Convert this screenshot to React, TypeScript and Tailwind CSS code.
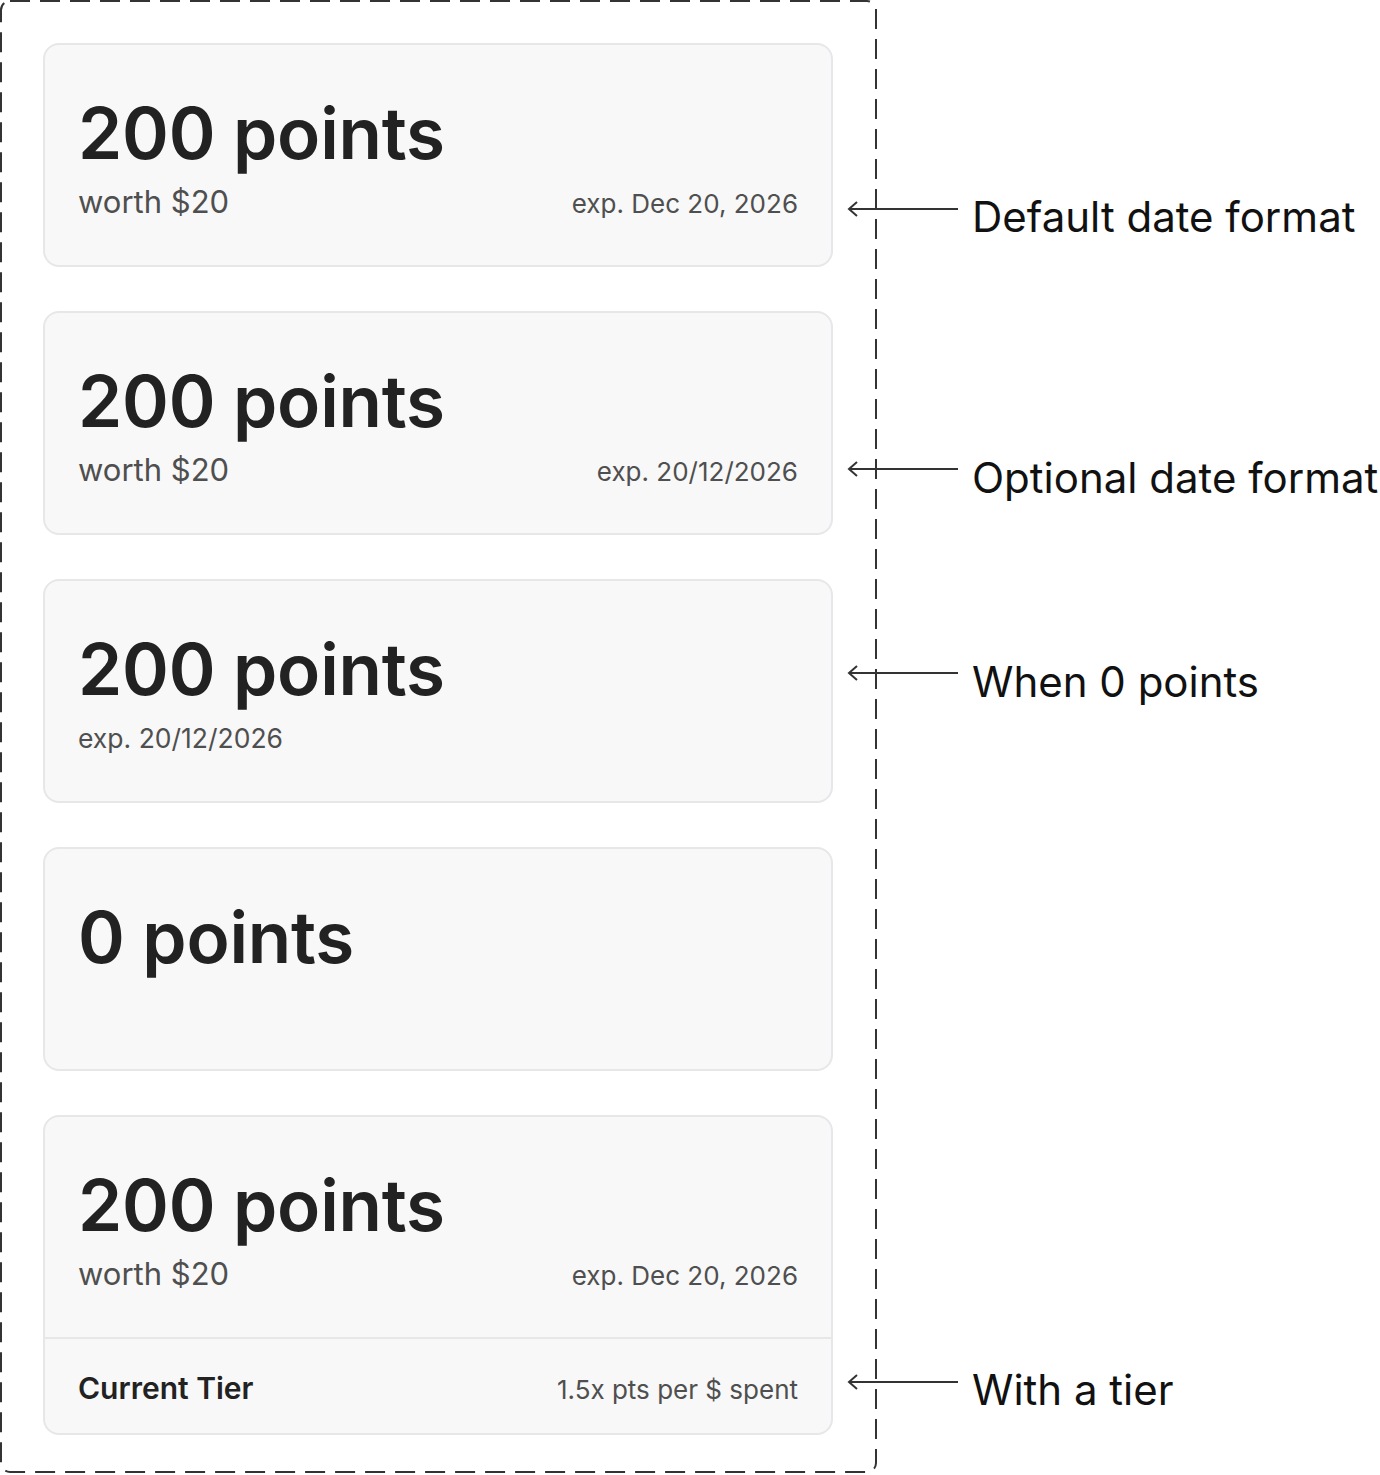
import React from "react";

type CardProps = {
  title: string;
  left?: string;
  leftSmall?: boolean;
  right?: string;
  tier?: boolean;
};

function Card({ title, left, leftSmall, right, tier }: CardProps) {
  return (
    <div className="w-[790px] rounded-[16px] border-2 border-[#e7e7ea] bg-[#f8f8f8]">
      <div className="h-[220px] px-[33px] pt-[53px]">
        <div className="text-[71px] leading-[70px] font-semibold text-[#222222] tracking-[-0.2px]">{title}</div>
        {(left || right) && (
          <div className="mt-[19px] flex items-baseline justify-between">
            {left ? (
              leftSmall ? (
                <span className="text-[26.5px] leading-[30px] text-[#4f4f4f]">{left}</span>
              ) : (
                <span className="text-[31px] leading-[30px] text-[#4f4f4f]">{left}</span>
              )
            ) : (
              <span />
            )}
            {right && <span className="text-[26px] leading-[30px] text-[#4f4f4f]">{right}</span>}
          </div>
        )}
      </div>
      {tier && (
        <div className="flex items-baseline justify-between border-t-2 border-[#e7e7ea] px-[33px] pt-[34px] pb-[30px]">
          <span className="text-[30px] leading-[30px] font-semibold text-[#222222]">Current Tier</span>
          <span className="text-[26px] leading-[26px] text-[#4f4f4f]">1.5x pts per $ spent</span>
        </div>
      )}
    </div>
  );
}

function Arrow({ y }: { y: number }) {
  return (
    <svg
      className="absolute left-[846px]"
      style={{ top: y - 8 }}
      width="114"
      height="16"
      viewBox="0 0 114 16"
      fill="none"
    >
      <path d="M3 8 H112" stroke="#333333" strokeWidth="2" />
      <path d="M11 1 L3 8 L11 15" stroke="#333333" strokeWidth="2" strokeLinejoin="miter" />
    </svg>
  );
}

function Note({ y, text }: { y: number; text: string }) {
  return (
    <div
      className="absolute left-[972px] whitespace-nowrap text-[42px] leading-[48px] text-[#111111]"
      style={{ top: y - 24 }}
    >
      {text}
    </div>
  );
}

export default function App() {
  return (
    <div className="relative w-[1380px] h-[1475px] overflow-hidden bg-white font-['Inter',sans-serif]">
      <div className="relative w-[877px] h-[1473px] pl-[43px] pt-[43px] flex flex-col gap-[44px]">
        <svg className="pointer-events-none absolute inset-0" width="877" height="1473" viewBox="0 0 877 1473" fill="none">
          <rect
            x="1"
            y="1"
            width="875"
            height="1471"
            rx="9"
            stroke="#333333"
            strokeWidth="2"
            strokeDasharray="20 10"
          />
        </svg>
        <Card title="200 points" left="worth $20" right="exp. Dec 20, 2026" />
        <Card title="200 points" left="worth $20" right="exp. 20/12/2026" />
        <Card title="200 points" left="exp. 20/12/2026" leftSmall />
        <Card title="0 points" />
        <Card title="200 points" left="worth $20" right="exp. Dec 20, 2026" tier />
      </div>

      <Arrow y={209} />
      <Arrow y={469} />
      <Arrow y={673} />
      <Arrow y={1382} />
      <Note y={217} text="Default date format" />
      <Note y={478} text="Optional date format" />
      <Note y={682} text="When 0 points" />
      <Note y={1390} text="With a tier" />
    </div>
  );
}
